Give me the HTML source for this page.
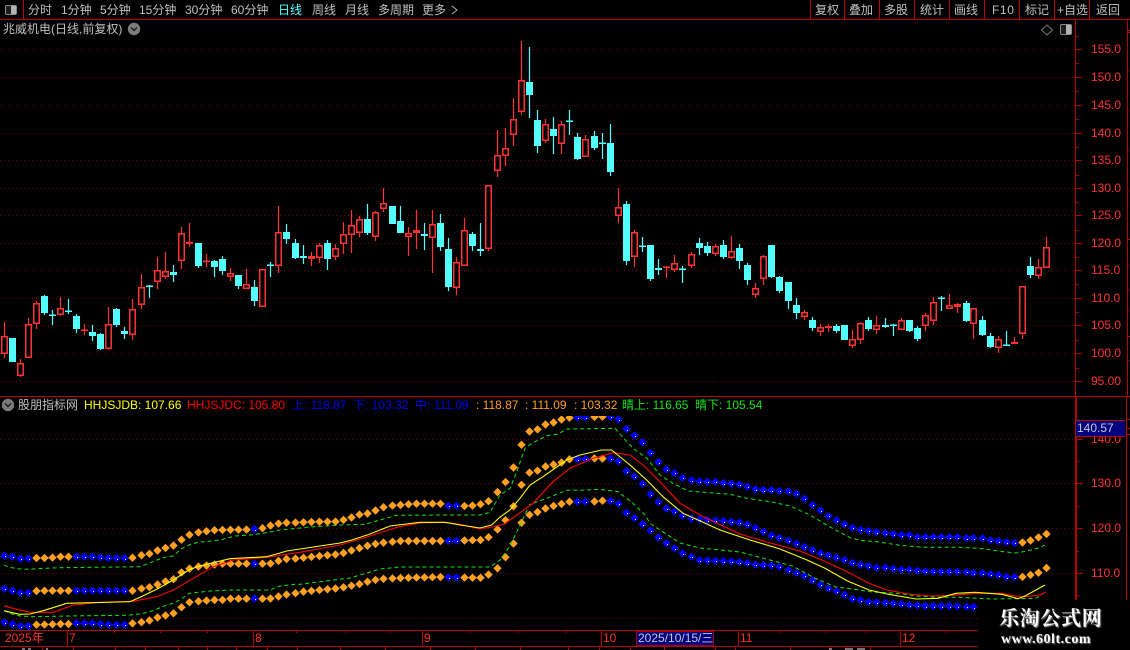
<!DOCTYPE html>
<html><head><meta charset="utf-8"><style>
html,body{margin:0;padding:0;background:#000;width:1130px;height:650px;overflow:hidden}
#w{position:relative;width:1130px;height:650px;background:#000;overflow:hidden}
svg{position:absolute;left:0;top:0}
.t{position:absolute;white-space:nowrap;font:12px/16px "Liberation Sans","Noto Sans CJK SC",sans-serif;color:#c0c0c0}
.m{top:2px}.a{color:#ff3232;left:1091px}.h{top:397px}
.d{color:#ff3232;top:630px}
</style></head><body><div id="w">
<svg id="s" width="1130" height="650" viewBox="0 0 1130 650"></svg>
<span class="t m" style="left:28px">分时</span><span class="t m" style="left:61px">1分钟</span><span class="t m" style="left:100px">5分钟</span><span class="t m" style="left:139px">15分钟</span><span class="t m" style="left:185px">30分钟</span><span class="t m" style="left:231px">60分钟</span><span class="t m" style="left:278px;color:#54ffff">日线</span><span class="t m" style="left:312px">周线</span><span class="t m" style="left:345px">月线</span><span class="t m" style="left:378px">多周期</span><span class="t m" style="left:422px">更多</span><span class="t m" style="left:815px">复权</span><span class="t m" style="left:849px">叠加</span><span class="t m" style="left:884px">多股</span><span class="t m" style="left:920px">统计</span><span class="t m" style="left:954px">画线</span><span class="t m" style="left:992px;letter-spacing:.6px">F10</span><span class="t m" style="left:1025px">标记</span><span class="t m" style="left:1057px">+自选</span><span class="t m" style="left:1096px">返回</span>
<span class="t" style="left:3px;top:21px">兆威机电(日线,前复权)</span>
<span class="t a" style="top:41px">155.0</span><span class="t a" style="top:69px">150.0</span><span class="t a" style="top:97px">145.0</span><span class="t a" style="top:125px">140.0</span><span class="t a" style="top:152px">135.0</span><span class="t a" style="top:180px">130.0</span><span class="t a" style="top:207px">125.0</span><span class="t a" style="top:235px">120.0</span><span class="t a" style="top:262px">115.0</span><span class="t a" style="top:290px">110.0</span><span class="t a" style="top:317px">105.0</span><span class="t a" style="top:345px">100.0</span><span class="t a" style="top:373px">95.00</span>
<span class="t" style="left:18px;top:397px">股朋指标网</span>
<span class="t h" style="left:84px;color:#ffff00">HHJSJDB: 107.66</span><span class="t h" style="left:187px;color:#ff0000">HHJSJDC: 105.80</span><span class="t h" style="left:292px;color:#0000e6">上: 118.87</span><span class="t h" style="left:353px;color:#0000e6">下: 103.32</span><span class="t h" style="left:415px;color:#0000e6">中: 111.09</span><span class="t h" style="left:476px;color:#ff9d1e">: 118.87</span><span class="t h" style="left:525px;color:#ff9d1e">: 111.09</span><span class="t h" style="left:574px;color:#ff9d1e">: 103.32</span><span class="t h" style="left:622px;color:#14e614">晴上: 116.65</span><span class="t h" style="left:695px;color:#14e614">晴下: 105.54</span>
<span class="t a" style="top:431px">140.0</span><span class="t a" style="top:475px">130.0</span><span class="t a" style="top:520px">120.0</span><span class="t a" style="top:565px">110.0</span>
<div style="position:absolute;left:1076px;top:420px;width:49px;height:15px;background:#000080;border:1px solid #c00000;border-width:1px 0"></div>
<span class="t" style="left:1077px;top:420px;color:#c8c8c8">140.57</span>
<span class="t d" style="left:5px">2025年</span><span class="t d" style="left:69px">7</span><span class="t d" style="left:255px">8</span><span class="t d" style="left:424px">9</span><span class="t d" style="left:603px">10</span><span class="t d" style="left:740px">11</span><span class="t d" style="left:902px">12</span>
<div style="position:absolute;left:636px;top:631px;width:78px;height:15px;background:#000080;box-shadow:inset 0 0 0 1px #a00000"></div>
<span class="t" style="left:638px;top:630px;color:#c8c8c8">2025/10/15/三</span>
<div style="position:absolute;left:978px;top:600px;width:152px;height:50px;background:#000"></div>
<span class="t" style="left:999px;top:605px;font:bold 20px/24px 'Noto Serif CJK SC','Noto Sans CJK SC',serif;letter-spacing:.7px;color:#fff;text-shadow:1px 1px 1px #888">乐淘公式网</span>
<span class="t" style="left:1001px;top:632px;font:bold 14px/16px 'Liberation Serif',serif;letter-spacing:.5px;color:#fff;text-shadow:1px 1px 1px #777">www.60lt.com</span>
</div>
<script>
var C=[[4.5,322,358,336,354,'r'],[12.5,338,362,338,362,'c'],[20.5,359,377,363,376,'r'],[28.5,318,358,324,358,'r'],[36.5,301,329,303,324,'r'],[44.5,295,315,296,313,'c'],[52.5,310,325,314.5,316,'c'],[60.5,297,316,308,315,'r'],[68.5,299,314,310.5,312,'c'],[76.5,314,333,316,329,'c'],[84.5,324,335,329.5,331,'r'],[92.5,325,341,332,336,'c'],[100.5,333,350,334,349,'c'],[108.5,307,350,324,349,'r'],[116.5,308,327,309,325,'c'],[124.5,327,339,331,334,'c'],[132.5,299,340,309,335,'r'],[141.5,274,309,287,305,'r'],[149.5,285,298,285.5,287,'c'],[157.5,257,289,270,282,'r'],[165.5,252,279,271,277,'r'],[173.5,265,282,272,275,'c'],[181.5,227,269,233,261,'r'],[189.5,223,247,242,244,'r'],[198.5,243,268,243,266,'c'],[206.5,254,267,260.5,262,'r'],[214.5,260,277,261,267,'c'],[222.5,256,275,259,271,'c'],[230.5,268,281,273,277,'r'],[238.5,275,289,275,286,'c'],[246.5,269,289,284,289,'r'],[254.5,280,306,287,301,'c'],[262.5,269,307,269,307,'r'],[270.5,262,277,264.5,266,'c'],[278.5,206,273,232,266,'r'],[286.5,224,244,232,239,'c'],[295.5,239,259,243,258,'c'],[303.5,245,264,256,258,'c'],[311.5,252,266,256,259,'r'],[319.5,243,263,245,258,'r'],[327.5,240,270,243,259,'c'],[335.5,244,260,248,257,'r'],[343.5,222,254,234,244,'r'],[351.5,210,253,225,235,'r'],[359.5,216,237,219,233,'r'],[367.5,204,235,219,233,'c'],[375.5,211,241,212,237,'r'],[383.5,188,212,203,209,'r'],[392.5,206,224,206,224,'c'],[400.5,206,233,221,233,'c'],[408.5,227,256,233,237,'r'],[416.5,210,249,230,233,'r'],[424.5,223,250,234,236,'c'],[432.5,210,273,224,238,'r'],[440.5,214,251,223,247,'c'],[448.5,238,291,249,287,'c'],[456.5,257,295,262,288,'r'],[464.5,218,266,230,266,'r'],[472.5,232,251,234,246,'c'],[480.5,223,256,249,251,'c'],[488.5,185,251,185,249,'r'],[497.5,130,177,155,171,'r'],[505.5,128,166,148,156,'r'],[513.5,98,146,119,135,'r'],[521.5,41,115,80,112,'r'],[529.5,47,118,82,95,'c'],[537.5,110,153,120,146,'c'],[545.5,119,143,124,141,'r'],[553.5,117,154,129,136,'c'],[561.5,121,154,124,144,'r'],[569.5,110,135,120.5,122,'c'],[577.5,133,160,137,159,'c'],[585.5,135,157,139,157,'r'],[594.5,131,150,136,148,'c'],[602.5,133,159,142.5,144,'c'],[610.5,124,176,143,172,'c'],[618.5,188,223,207,216,'r'],[626.5,201,265,204,261,'c'],[634.5,230,267,232,257,'r'],[642.5,237,252,245.5,247,'c'],[650.5,245,281,245,279,'c'],[658.5,259,275,268,270,'c'],[666.5,266,278,266.5,268,'r'],[674.5,255,272,263,270,'r'],[682.5,266,283,268.5,270,'c'],[691.5,252,268,254,266,'r'],[699.5,238,255,243,248,'c'],[707.5,242,256,246,253,'c'],[715.5,244,256,246,254,'r'],[723.5,240,259,245,257,'c'],[731.5,236,259,251,258,'r'],[739.5,244,269,248,261,'c'],[747.5,263,285,265,280,'c'],[755.5,283,298,288,295,'r'],[763.5,255,285,256,279,'r'],[771.5,245,278,245,277,'c'],[779.5,276,293,277,291,'c'],[788.5,282,309,282,301,'c'],[796.5,298,319,305,313,'c'],[804.5,310,320,312,317,'r'],[812.5,317,331,320,328,'c'],[820.5,324,336,327,332,'r'],[828.5,324,332,326,328,'r'],[836.5,324,333,326,331,'c'],[844.5,325,340,325,340,'c'],[852.5,330,348,339,346,'r'],[860.5,322,344,323,340,'r'],[868.5,317,331,320,329,'c'],[876.5,316,334,325,330,'r'],[885.5,318,328,325,327,'c'],[893.5,324,336,324.5,326,'c'],[901.5,318,330,320,330,'r'],[909.5,320,332,320,331,'c'],[917.5,326,341,328,339,'c'],[925.5,313,331,315,326,'r'],[933.5,297,325,302,321,'r'],[941.5,296,311,297.5,299,'c'],[949.5,294,309,305,309,'r'],[957.5,303,313,304,307,'r'],[966.5,301,322,303,321,'c'],[973.5,308,339,308,324,'r'],[982.5,316,336,320,335,'c'],[990.5,333,348,336,347,'c'],[998.5,336,353,339,348,'r'],[1006.5,331,346,344.5,346,'c'],[1014.5,337,344,342,344,'r'],[1022.5,286,339,286,334,'r'],[1030.5,257,278,266,275,'c'],[1038.5,259,279,267,276,'r'],[1046.5,237,268,247,268,'r']];
function Z(ox,oy,sx,a){var r=[];for(var i=0;i<a.length;i+=2)r.push([ox+a[i]/sx,oy+a[i+1]/3]);return r}
function R(a){var r=[];for(var i=0;i<a.length;i+=2)r.push([a[i],a[i+1]]);return r}
var top_=[].concat(
Z(0,540,3,[12,47,36,50,60,56,84,56,108,54,132,54,156,53,180,50,204,50,228,50,252,50,276,50,300,52,327,54,351,54,375,54,399,53,423,46,447,42,471,32,495,24,519,18,543,0]),
R([190,534.5,200,532,216,530,250,529.5,264,528,275,524]),
Z(280,395,3,[17,383,45,383,117,380,165,380,189,375,213,368,237,359,261,356,285,347,309,337,335,332,360,330,384,328,408,326,480,326,504,332,528,332,552,333,576,332,600,328,624,320,651,293,675,264,699,222,723,152,747,110,771,104,795,89,819,83,843,74,867,68,965,65,990,65,1014,71,1038,101,1062,120,1086,140,1110,172,1134,200,1158,222,1182,233,1206,248,1230,255,1254,258,1280,260,1305,260,1329,264,1353,266,1377,268,1401,275,1425,282,1450,285,1470,285]),
R([780,491,790,491.5,800,495,810,503,820,510,830,517]),
Z(840,395,3,[12,387,36,398,60,404,84,407,108,411,135,414,159,417,183,420,207,420,231,426,351,426,375,429,426,429,450,435,474,438,498,441,522,444,546,443,570,437,594,428,618,417]));
var mid=[].concat(
Z(0,540,3,[12,146,36,152,60,158,84,158,108,153,132,152,375,152,399,152,423,146,447,142,471,134,495,125,519,119,543,98,567,86,594,80,618,77,642,74,666,71,810,71,834,63,858,57,885,56]),
R([310,557,320,556,330,555,340,554,350,551,360,548,370,545,380,543,390,542,400,541,445,541,481,540,489,537,497,530]),
Z(280,395,3,[675,378,699,338,723,272,747,233,771,228,795,215,819,209,843,203,867,193,891,193,915,192,940,190,965,191,990,190,1014,197,1038,228,1062,243,1086,264,1110,296,1134,320,1158,340,1182,348,1206,362,1230,370,1254,372,1280,375,1305,376,1329,378,1353,380,1377,382,1401,388]),
R([760,530,770,535,780,538,790,541,800,545,810,549,820,553,830,556]),
Z(840,395,3,[12,494,36,503,60,509,84,513,108,518,135,518,159,521,183,524,207,524,231,527,279,530,375,530,399,534,426,534,450,537,474,540,498,546,546,546,570,540,594,534,618,519]));
var bot=[].concat(
Z(0,540,3,[12,247,36,252,60,258,84,258,108,254,132,254,180,252,204,252,228,250,276,250,300,252,327,254,375,254,399,250,423,247,447,242,471,233,495,227,519,221,543,203,567,187,594,184,618,182,642,180,666,180,690,176,810,176,834,170,858,164,885,160]),
R([300,592,320,590,340,588,350,586,360,584,370,581,380,579,400,578,440,577,480,578,490,574,497,569,505,558,513,545]),
Z(280,395,3,[723,385,747,360,771,352,795,341,819,333,843,327,867,320,940,320,965,317,990,317,1014,324,1038,352,1062,368,1086,386]),
R([650,530,658,537,666,543,674,548,682,553,690,556]),
Z(560,560,2.75,[380,0,425,2,447,3,470,4,492,6,514,9,536,14,558,15,580,16,603,20,627,30,649,38,671,47,693,60,715,73,737,85,759,93,782,104,803,116,825,120,848,126,870,127,893,128,915,130,937,132,961,135,982,136,1005,138,1072,138,1095,139,1115,140,1137,141,1300,141]));
var gU=[].concat(Z(0,540,3,[12,76,36,83,60,87,84,88,132,85,180,83,420,80,447,70,471,60,495,52,519,48,543,27,567,15,594,7,642,2,660,0]),R([235,536,250,535,265,533,280,530,310,527,340,525,365,524.3,396.7,515.3,440,515,480,515,490,512.3,500,495,510,488.3,516.7,471.7,525,448.3,533,442.7,547,435.7,558,434,567,429,615,428.3,623,437.3,633,448.3,647,458.3,660,475,673,483.3,688,491,710,492.7,730,494.3,747,498.3,770,501.7,790,506,810,515,830,527]),Z(840,395,3,[0,412,30,428,60,436,110,440,180,451,250,457,360,457,430,461,490,470,530,474,560,468,600,458,618,448]));
var gL=[].concat(Z(0,540,3,[12,212,36,222,60,228,100,230,200,228,380,226,420,222,447,216,471,207,495,197,519,190,543,178,567,160,594,157,630,153,700,150,810,150,840,138,885,133,900,133]),R([350,578,380,569,400,567,490,567,500,560,510,546,520,525,530,504.3,546.7,498.3,566.7,490.3,580,490.3,600,489.3,618,491.7,633,503.3,645,515,650,523.3,660,530,680,543,700,548,740,552,770,560,792.7,566,814.5,578,836,587,854.5,589.3,872.7,592,898,593.3,916,596,938,597.3,960,597.3,985,598.7,993,599,1036,598.3,1043.6,593.3]));
var ye=[].concat(Z(0,540,3,[12,212,36,218,60,223,90,222,130,212,200,190,390,185,420,172,470,148,520,120,570,88,600,78,640,68,690,56,800,50,830,42,860,33,900,27]),R([340,543,352,540,370,534,390,526,420,522.3,445,522.3,460,525,480,528,491.7,525,500,517,510,510,520,498.3,530,485,543,476.7,566.7,460,580,455,601.7,450,611.7,450,630,465,646.7,480,663,496.7,683,513.3,703,522.3,720,530,750,540,780,549,807,560,825,568.3,847,580.7,869,590,887,594,916,599,938,598.3,956,593.3,975,592.3,1002,594.3,1018,598.7,1025,596,1045,585]));
var re=[].concat(Z(0,540,3,[12,197,50,208,90,217,160,217,220,195,300,187,400,184,470,170,520,150,580,115,640,80,700,60,800,52,900,37]),R([340,545,370,536,398,527,420,523,443,522.3,460,524.3,480,529,492,527,504,524.3,533,503.3,553,481.7,570,468.3,593,458.3,613,452.7,630,455,643,465,660,481.7,680,503.3,700,515,717,523.3,740,534,770,543,800,551,822,560,847,571.7,869,583.3,887,590,909,594,931,596,949,595.6,978,593.3,1002,593.3,1015,596,1025,596.7,1040,595,1046,592.3]));
function interp(p,x){var i;if(x<=p[0][0])return p[0][1];for(i=1;i<p.length;i++){if(p[i][0]>=x){var a=p[i-1],b=p[i];return a[1]+(b[1]-a[1])*(x-a[0])/(b[0]-a[0])}}return p[p.length-1][1]}
function poly(p){return p.map(function(q){return q[0].toFixed(1)+','+q[1].toFixed(1)}).join(' ')}
function blue(i){return i<=3||(i>=9&&i<=15)||i==31||i==55||i==56||i==71||i==72||(i>=75&&i<=125)}
var o=[],RL='#b80000',i,y;
var gy=[49.5,77.5,105.5,133.5,160.5,188.5,215.5,243.5,270.5,298.5,325.5,353.5,381.5];
var P=[];
gy.forEach(function(v){P.push('M0 '+v+'H1075')});
o.push('<path d="'+P.join('')+'" stroke="#760000" stroke-width="1" stroke-dasharray="1 3" shape-rendering="crispEdges" fill="none"/>');
P=[];[439.5,483.5,528.5,573.5].forEach(function(v){P.push('M0 '+v+'H1075')});
P.push('M0 618.5H978');
o.push('<path d="'+P.join('')+'" stroke="#760000" stroke-width="1" stroke-dasharray="1 3" shape-rendering="crispEdges" fill="none"/>');
var wr='',wc='',br='',bc='';
C.forEach(function(c){var x=c[0],wt=c[1],wb=c[2],t=c[3],b=c[4],red=c[5]=='r',w='M'+x+' '+wt+'V'+t+'M'+x+' '+b+'V'+wb;
if(red){wr+=w;if(b-t<=3)br+='<rect x="'+(x-3.5)+'" y="'+t+'" width="7" height="'+Math.max(b-t,1.6)+'" fill="#ff3232"/>';else br+='<rect x="'+(x-2.75)+'" y="'+(t+.75)+'" width="5.5" height="'+(b-t-1.5)+'" fill="#000" stroke="#ff3232" stroke-width="1.5"/>'}
else{wc+=w;bc+='<rect x="'+(x-3.5)+'" y="'+t+'" width="7" height="'+Math.max(b-t,1.5)+'" fill="#54ffff"/>'}});
o.push('<path d="'+wr+'" stroke="#ff3232" stroke-width="1.2" fill="none"/><path d="'+wc+'" stroke="#54ffff" stroke-width="1.2" fill="none"/>'+br+bc);
o.push('<defs><clipPath id="cp"><rect x="0" y="416" width="1075" height="214"/></clipPath></defs><g clip-path="url(#cp)">');
var db='',dw='',dr='',DS=4.2;
C.forEach(function(c,i){[top_,mid,bot].forEach(function(b,k){var x=c[0],yy=interp(b,x);if(k==2&&x>975)return;var d='M'+(x-DS)+' '+yy.toFixed(1)+'L'+x+' '+(yy-DS).toFixed(1)+'L'+(x+DS)+' '+yy.toFixed(1)+'L'+x+' '+(yy+DS).toFixed(1)+'Z';
if(blue(i)){db+=d;dw+='<rect x="'+Math.round(x+.5)+'" y="'+Math.round(yy+.5)+'" width="1" height="1" fill="#fff"/>'}else dr+=d})});
o.push('<path d="'+db+'" fill="#0000ff"/><path d="'+dr+'" fill="#ffa020"/>'+dw);
o.push('<polyline points="'+poly(gU)+'" fill="none" stroke="#14e614" stroke-width="1" stroke-dasharray="4 3"/><polyline points="'+poly(gL)+'" fill="none" stroke="#14e614" stroke-width="1" stroke-dasharray="4 3"/>');
o.push('<polyline points="'+poly(re)+'" fill="none" stroke="#ff0000" stroke-width="1.1"/><polyline points="'+poly(ye)+'" fill="none" stroke="#ffff00" stroke-width="1.1"/>');
o.push('</g>');
var L='M0 19.5H1130M23.5 0V19M810.5 0V19M844.5 0V19M879.5 0V19M914.5 0V19M949.5 0V19M984.5 0V19M1019.5 0V19M1054.5 0V19M1089.5 0V19M0 396.5H1130M0 630.5H978M0 646.5H978M67.5 631V646M253.5 631V646M422.5 631V646M601.5 631V646M738.5 631V646M900.5 631V646';
gy.forEach(function(v){L+='M1075 '+v+'H1082'});
[230,257,284,312,340,368,202,175,147,119,91,63,36].forEach(function(v){L+='M1075 '+v+'.5H1079'});
[439.5,483.5,528.5,573.5].forEach(function(v){L+='M1075 '+v+'H1083'});
[461.5,506.5,551.5,595.5].forEach(function(v){L+='M1075 '+v+'H1079'});
[114,160,207,296,345,390,470,518,565,650,690,780,825,865,945].forEach(function(v){L+='M'+v+'.5 630V633'});
[42,73,115,145,178,207,236,267,297,340,385,430,475,520,568,599,630,664,715,735,790,829,845,870].forEach(function(v){L+='M'+v+'.5 647V650'});
[30,32,239,336,419,428,434].forEach(function(v){L+='M1127 '+v+'.5H1130'});
[70,110,150,190,265,290,310,360].forEach(function(v){L+='M1127 '+v+'.5H1129'});
L+='M1075.5 19V600M1126.5 397V600M1127.5 19V397';
o.push('<path d="'+L+'" stroke="'+RL+'" stroke-width="1" fill="none" shape-rendering="crispEdges"/>');
o.push('<path d="M1076.5 397V600" stroke="'+RL+'" stroke-width="1" shape-rendering="crispEdges"/>');
o.push('<rect x="5.5" y="5.5" width="11" height="9" rx="1.5" fill="#1c1c1c" stroke="#8a8a8a"/><rect x="11" y="6" width="5" height="8" fill="#b4b4b4"/>');
o.push('<rect x="1060.5" y="24.5" width="11" height="10" rx="1.5" fill="#1c1c1c" stroke="#8a8a8a"/><rect x="1066" y="25" width="5" height="9" fill="#b4b4b4"/>');
o.push('<path d="M1047 25L1052.5 30L1047 35L1041.5 30Z" fill="none" stroke="#7a7a7a"/>');
o.push('<path d="M452 6L457 10L452 14" fill="none" stroke="#b0b0b0" stroke-width="1"/>');
o.push('<circle cx="134" cy="29" r="6.2" fill="#7c7c7c"/><path d="M131 27.5L134 30.5L137 27.5" fill="none" stroke="#1a1a1a" stroke-width="1.4"/>');
o.push('<circle cx="8" cy="405" r="6.2" fill="#7c7c7c"/><path d="M5 403.5L8 406.5L11 403.5" fill="none" stroke="#1a1a1a" stroke-width="1.4"/>');
o.push('<path d="M22 649h3M28 649h3M46 649h2M829 649h3M845 649h8M857 649h8" stroke="#bbb" stroke-width="1.2" fill="none"/>');
document.getElementById('s').innerHTML=o.join('');
</script>
</body></html>
